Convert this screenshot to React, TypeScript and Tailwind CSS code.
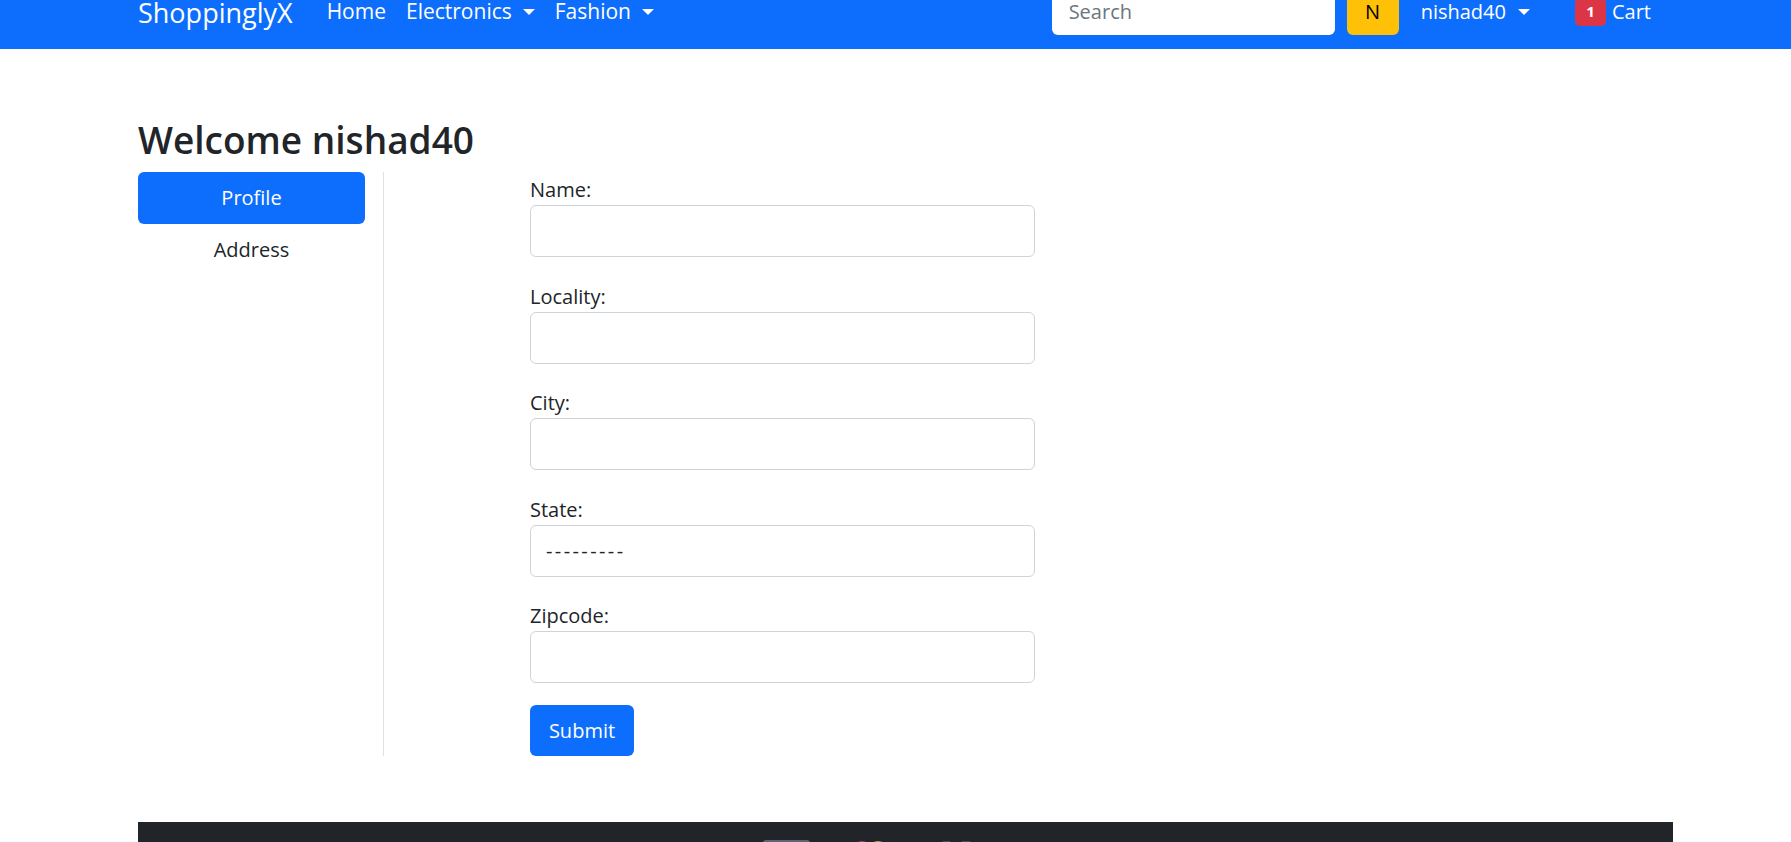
import { useLayoutEffect } from 'react';

function Caret({ gap = 'ml-[11px]' }: { gap?: string }) {
  return (
    <span
      className={`${gap} inline-block h-0 w-0 border-x-[6px] border-t-[6px] border-x-transparent border-t-white`}
    />
  );
}

function Field({ label, children }: { label: string; children: React.ReactNode }) {
  return (
    <div className="flex flex-col">
      <label className="text-[20px] leading-[30px]">{label}</label>
      {children}
    </div>
  );
}

const inputCls =
  'h-[52px] w-full rounded-[6px] border border-[#ced4da] bg-white px-[15px] text-[20px] text-[#212529] outline-none';

export default function App() {
  // the screenshot is taken with the page scrolled a little
  useLayoutEffect(() => {
    window.scrollTo(0, 26);
  }, []);

  return (
    <div className="min-h-screen bg-white font-['Open_Sans',sans-serif] text-[#212529]">
      <nav className="bg-[#0d6efd] py-[14px]">
        <div className="ml-[138px] flex w-[1535px] items-center pr-[12px]">
          <a className="mr-[24px] mt-[3px] text-[27px] leading-[1.5] text-white">ShoppinglyX</a>
          <div className="flex items-center text-[21px] text-white">
            <a className="px-[10px]">Home</a>
            <a className="flex items-center px-[10px]">
              Electronics
              <Caret />
            </a>
            <a className="flex items-center px-[10px]">
              Fashion
              <Caret />
            </a>
          </div>

          <div className="ml-auto flex items-center">
            <input
              placeholder="Search"
              className="h-[47px] w-[283px] rounded-[6px] bg-white px-[17px] text-[20px] outline-none placeholder:text-[#6c757d]"
            />
            <button className="ml-[12px] h-[47px] w-[52px] rounded-[6px] bg-[#ffc107] text-[20px] text-black">
              N
            </button>
            <div className="flex items-center text-[20px] text-white">
              <a className="ml-[12px] flex items-center px-[10px]">
                nishad40
                <Caret gap="ml-[12px]" />
              </a>
              <a className="ml-[25px] flex items-center pl-[10px] pr-[10px]">
                <span className="flex h-[28px] w-[31px] items-center justify-center rounded-[5px] bg-[#dc3545] text-[15px] font-bold">
                  1
                </span>
                <span className="ml-[6px]">Cart</span>
              </a>
            </div>
          </div>
        </div>
      </nav>

      <main className="ml-[138px] w-[1535px] pt-[69px]">
        <h3 className="mb-[10px] text-[37px] font-semibold leading-[1.2]">Welcome nishad40</h3>

        <div className="flex">
          <div className="w-[246px] border-r border-[#dee2e6]">
            <div className="w-[227px] text-[20px]">
              <div className="flex h-[52px] items-center justify-center rounded-[6px] bg-[#0d6efd] text-white">
                Profile
              </div>
              <div className="flex h-[52px] items-center justify-center">Address</div>
            </div>
          </div>

          <form className="ml-[146px] flex w-[505px] flex-col pt-[3px]">
            <div className="flex flex-col gap-[24.5px]">
              <Field label="Name:">
                <input className={inputCls} />
              </Field>
              <Field label="Locality:">
                <input className={inputCls} />
              </Field>
              <Field label="City:">
                <input className={inputCls} />
              </Field>
              <Field label="State:">
                <select className={`${inputCls} appearance-none tracking-[2.4px]`}>
                  <option>---------</option>
                </select>
              </Field>
              <Field label="Zipcode:">
                <input className={inputCls} />
              </Field>
            </div>
            <button
              type="button"
              className="mt-[22px] h-[51px] w-[104px] rounded-[6px] bg-[#0d6efd] text-[20px] text-white"
            >
              Submit
            </button>
          </form>
        </div>

        <footer className="mt-[66px] h-[200px] bg-[#212529] pt-[18px]">
          <div className="ml-[625px] flex items-start">
            <div className="h-[30px] w-[47px] rounded-[3px] bg-[#5f6472]" />
            <svg className="ml-[42px]" width="36" height="24" viewBox="0 0 36 24">
              <circle cx="10" cy="11" r="10" fill="#c8424f" />
              <circle cx="26" cy="11" r="10" fill="#d9b84a" fillOpacity="0.9" />
            </svg>
            <div className="ml-[54px] mt-[1px] h-[20px] w-[9px] rounded-[2px] bg-[#4a4e57]" />
            <div className="ml-[10px] mt-[1px] h-[20px] w-[10px] rounded-[2px] bg-[#4a4e57]" />
          </div>
        </footer>
      </main>
    </div>
  );
}
